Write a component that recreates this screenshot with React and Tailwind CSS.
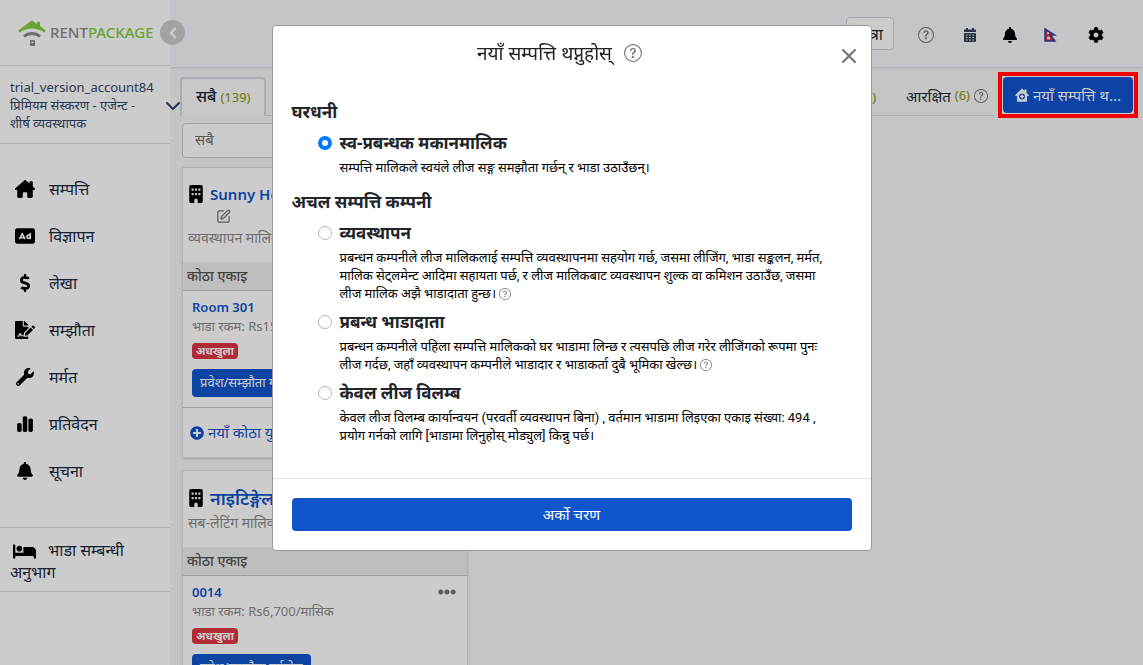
import { useState } from 'react';
import {
    FaDollarSign,
    FaFileSignature,
    FaWrench,
    FaBell,
    FaBed,
    FaCog,
    FaPlusCircle,
    FaEllipsisH,
} from 'react-icons/fa';
import {
    FaRectangleAd,
    FaChartSimple,
    FaBuilding,
    FaHouseChimney,
} from 'react-icons/fa6';
import { BsQuestionCircle } from 'react-icons/bs';
import { ChevronDown, ChevronLeft, SquarePen, X } from 'lucide-react';

const menuItems = [
    { label: 'सम्पत्ति', icon: FaHouseChimney, size: 20 },
    { label: 'विज्ञापन', icon: FaRectangleAd, size: 20 },
    { label: 'लेखा', icon: FaDollarSign, size: 18 },
    { label: 'सम्झौता', icon: FaFileSignature, size: 20 },
    { label: 'मर्मत', icon: FaWrench, size: 18 },
    { label: 'प्रतिवेदन', icon: FaChartSimple, size: 18 },
    { label: 'सूचना', icon: FaBell, size: 18 },
];

const buildings = [
    {
        name: 'Sunny Home',
        nameClass: 'text-[15px] leading-6',
        editable: true,
        type: 'व्यवस्थापन मालिक',
        unit: {
            name: 'Room 301',
            rent: 'भाडा रकम: Rs15,000/मासिक',
            action: 'प्रवेश/सम्झौता गर्नुहोस्',
        },
    },
    {
        name: 'नाइटिङ्गेल',
        nameClass: 'text-lg leading-[26px]',
        editable: false,
        type: 'सब-लेटिंग मालिक',
        unit: {
            name: '0014',
            rent: 'भाडा रकम: Rs6,700/मासिक',
            action: 'प्रवेश/सम्झौता गर्नुहोस्',
        },
    },
];

const ownerGroups = [
    {
        title: 'घरधनी',
        options: [
            {
                id: 'self',
                label: 'स्व-प्रबन्धक मकानमालिक',
                text: 'सम्पत्ति मालिकले स्वयंले लीज सङ्ग समझौता गर्छन् र भाडा उठाउँछन्।',
            },
        ],
    },
    {
        title: 'अचल सम्पत्ति कम्पनी',
        options: [
            {
                id: 'management',
                label: 'व्यवस्थापन',
                text: 'प्रबन्धन कम्पनीले लीज मालिकलाई सम्पत्ति व्यवस्थापनमा सहयोग गर्छ, जसमा लीजिंग, भाडा सङ्कलन, मर्मत, मालिक सेट्लमेन्ट आदिमा सहायता पर्छ, र लीज मालिकबाट व्यवस्थापन शुल्क वा कमिशन उठाउँछ, जसमा लीज मालिक अझै भाडादाता हुन्छ।',
                help: true,
            },
            {
                id: 'sublease',
                label: 'प्रबन्ध भाडादाता',
                text: 'प्रबन्धन कम्पनीले पहिला सम्पत्ति मालिकको घर भाडामा लिन्छ र त्यसपछि लीज गरेर लीजिंगको रूपमा पुनः लीज गर्दछ, जहाँ व्यवस्थापन कम्पनीले भाडादार र भाडाकर्ता दुबै भूमिका खेल्छ।',
                help: true,
            },
            {
                id: 'lease',
                label: 'केवल लीज विलम्ब',
                text: 'केवल लीज विलम्ब कार्यान्वयन (परवर्ती व्यवस्थापन बिना) , वर्तमान भाडामा लिइएका एकाइ संख्या: 494 , प्रयोग गर्नको लागि [भाडामा लिनुहोस् मोड्युल] किन्नु पर्छ।',
            },
        ],
    },
];

function Logo() {
    return (
        <a href="#home" className="flex items-center gap-1 text-[15px]">
            <svg width="28" height="28" viewBox="0 0 28 28" aria-hidden="true">
                <path
                    d="M0 11.500 14 1.500 19 5V3L22 2.500V7L28 11.500 26.500 13.500C18.500 8 9.500 8 1.500 13.500z"
                    fill="#84cc3d"
                />
                <path
                    d="M6 17.500C10.500 13.500 17.500 13.500 22 17.500"
                    fill="none"
                    stroke="#8a8a8a"
                    strokeWidth="3"
                />
                <path
                    d="M12 21h5v6h-5zM13.500 22.500v1.500h2v-1.500z"
                    fill="#8a8a8a"
                    fillRule="evenodd"
                />
            </svg>
            <span className="font-medium text-[#8a8a8a]">
                RENT<span className="text-[#84cc3d]">PACKAGE</span>
            </span>
        </a>
    );
}

function NepalFlag() {
    return (
        <svg width="20" height="14" viewBox="0 0 20 14" aria-hidden="true">
            <rect x="1" width="19" height="14" fill="#f8f8fa" />
            <path
                d="M2 1 11.500 7H7.500L12 13H2z"
                fill="#dc3250"
                stroke="#3040a0"
                strokeWidth="1.5"
            />
            <circle cx="5" cy="5" r="1" fill="#fff" />
            <circle cx="5.500" cy="10" r="1.500" fill="#fff" />
        </svg>
    );
}

function CalendarIcon() {
    return (
        <svg
            width="14"
            height="14"
            viewBox="0 0 14 14"
            className="ml-1 text-gray-700"
            aria-hidden="true"
        >
            <path
                d="M3 0h2v1.500h4V0h2v1.500h1.500a.5.5 0 0 1 .5.5V4H1V2a.5.5 0 0 1 .5-.5H3z"
                fill="currentColor"
            />
            <rect x="1" y="5" width="12" height="9" rx="1" fill="currentColor" />
            <path
                d="M3 7h1.500M6.200 7h1.500M9.500 7H11M3 9.500h1.500M6.200 9.500h1.500M9.500 9.500H11M3 12h1.500M6.200 12h1.500M9.500 12H11"
                stroke="#f5f7fb"
                strokeWidth="1"
            />
        </svg>
    );
}

function HouseAddIcon() {
    return (
        <svg width="14" height="14" viewBox="0 0 14 14" aria-hidden="true">
            <path
                d="M7 0.500 9.500 2.800V1.500h2v3.200L14 7.200l-.8.800H12v5a.7.7 0 0 1-.7.700H2.700A.7.700 0 0 1 2 13V8H.800L0 7.200z"
                fill="currentColor"
            />
            <circle cx="7" cy="8.500" r="3" fill="#0d43a6" />
            <path d="M7 6.500v4M5 8.500h4" stroke="currentColor" strokeWidth="1.300" />
        </svg>
    );
}

function Sidebar() {
    return (
        <aside className="relative w-[170px] shrink-0 bg-white">
            <div className="flex h-[66px] items-center border-b border-[#dcdcdc] pl-[18px]">
                <Logo />
            </div>
            <button
                type="button"
                aria-label="Collapse"
                className="absolute top-5 -right-[15px] z-10 flex size-[25px] items-center justify-center rounded-full bg-[#cccccc] text-white"
            >
                <ChevronLeft size={18} strokeWidth={3} />
            </button>
            <div className="relative border-b border-[#dcdcdc] pt-3 pb-[11px] pl-2.5 text-[13px] leading-[18px] text-[#344767]">
                <p>trial_version_account84</p>
                <p className="w-[140px]">
                    प्रिमियम संस्करण - एजेन्ट - शीर्ष व्यवस्थापक
                </p>
                <ChevronDown
                    size={24}
                    className="absolute top-7 -right-[15px] z-10"
                />
            </div>
            <nav className="flex flex-col pt-[21px] text-base text-[#1c2a3f]">
                {menuItems.map(({ label, icon: Icon, size }) => (
                    <a
                        key={label}
                        href="#menu"
                        className="flex h-[47px] items-center gap-3.5 pl-[15px]"
                    >
                        <span className="flex w-5 justify-center text-black">
                            <Icon size={size} />
                        </span>
                        {label}
                    </a>
                ))}
            </nav>
            <a
                href="#rent"
                className="mt-[33px] block border-y border-[#dcdcdc] pt-[11px] pb-2 pl-2.5 text-base leading-[22px] text-[#1c2a3f]"
            >
                <FaBed
                    size={23}
                    className="-my-2 mr-3 ml-[3px] inline align-middle text-black"
                />
                भाडा सम्बन्धी
                <br />
                अनुभाग
            </a>
        </aside>
    );
}

function Header() {
    return (
        <header className="flex h-[67px] items-center justify-end bg-[#f5f7fb] pr-[39px] shadow-sm">
            <button
                type="button"
                className="mr-6 h-[33px] rounded border border-[#cfd3d8] bg-white px-2.5 text-base text-gray-800"
            >
                यात्रा
            </button>
            <div className="flex items-center gap-[25px] pt-0.5 text-black">
                <BsQuestionCircle size={16} className="text-neutral-500" />
                <CalendarIcon />
                <FaBell size={16} />
                <NepalFlag />
                <FaCog size={16} />
            </div>
        </header>
    );
}

function Tabs() {
    return (
        <div className="flex items-start gap-1 pt-[5px] pr-[5px] pl-2.5 text-[15px]">
            <div className="mt-[5px] flex h-[39px] grow items-stretch border-b border-[#d5d9de]">
                <button
                    type="button"
                    className="-mb-px rounded-t border-2 border-b-0 border-[#d5dbe3] bg-[#fafafa] px-3.5 pb-1 text-gray-800"
                >
                    <span className="text-base font-medium">सबै</span>{' '}
                    <span className="text-[13px] text-[#889900]">(139)</span>
                </button>
                <button type="button" className="ml-auto px-2 text-gray-800">
                    खाली <span className="text-[13px] text-[#889900]">(0)</span>
                </button>
                <button
                    type="button"
                    className="flex items-center gap-1 pr-1.5 pl-[22px] text-gray-800"
                >
                    आरक्षित{' '}
                    <span className="text-[13px] text-[#889900]">(6)</span>
                    <BsQuestionCircle size={14} className="text-neutral-500" />
                </button>
            </div>
            <div className="relative z-30 border-4 border-[#f00000] bg-[#c6c6c6] p-px">
                <button
                    type="button"
                    className="flex h-9 w-[130px] items-center justify-center gap-1 rounded bg-[#0d43a6] text-[#cccccc]"
                >
                    <HouseAddIcon />
                    नयाँ सम्पत्ति थ...
                </button>
            </div>
        </div>
    );
}

function BuildingCard({ building }) {
    const { name, nameClass, editable, type, unit } = building;

    return (
        <article className="mb-3 border border-[#e0e0e0] bg-white shadow">
            <div className="px-[5px] pt-3.5 pb-3">
                <h3 className="flex items-center gap-[5px] font-semibold text-[#1155cc]">
                    <FaBuilding size={18} className="-ml-px text-black" />
                    <span className={nameClass}>{name}</span>
                </h3>
                {editable && (
                    <button
                        type="button"
                        aria-label="Edit"
                        className="ml-7 block h-5 text-neutral-500"
                    >
                        <SquarePen size={15} />
                    </button>
                )}
                <p className="text-sm leading-6 text-[#8a8a8a]">{type}</p>
            </div>
            <h4 className="border-b border-[#c8c8c8] bg-[#eeeeee] px-1 text-sm leading-7 font-medium text-neutral-600">
                कोठा एकाइ
            </h4>
            <div className="border-b border-[#c8c8c8] px-[9px] pt-1.5 pb-2.5">
                <div className="flex items-center justify-between text-[#1155cc]">
                    <a
                        href="#unit"
                        className="text-[13px] leading-5 font-semibold"
                    >
                        {unit.name}
                    </a>
                    <FaEllipsisH size={18} className="mr-0.5 text-neutral-500" />
                </div>
                <p className="text-[13px] leading-[18px] text-[#8a8a8a]">
                    {unit.rent}
                </p>
                <div className="flex pt-2 pb-2.5">
                    <span className="rounded bg-[#dc3545] px-1 text-[11px] leading-4 font-bold text-white">
                        अधखुला
                    </span>
                </div>
                <button
                    type="button"
                    className="block h-7 rounded-sm bg-[#1155cc] px-2 text-[13px] text-white"
                >
                    {unit.action}
                </button>
            </div>
            <button
                type="button"
                className="flex h-[49px] items-center gap-1 px-[7px] text-[15px] text-[#1155cc]"
            >
                <FaPlusCircle size={14} />
                नयाँ कोठा युनिट
            </button>
        </article>
    );
}

function AddPropertyModal() {
    const [selected, setSelected] = useState('self');

    return (
        <div className="fixed inset-0 z-40 flex items-start justify-center pt-[25px]">
            <div
                role="dialog"
                aria-labelledby="modal-title"
                className="w-[600px] max-w-full rounded border border-[#999999] bg-white"
            >
                <div className="relative flex items-center justify-center gap-3 pt-3 pr-6 text-[#222222]">
                    <h2 id="modal-title" className="text-[19px] leading-[30px]">
                        नयाँ सम्पत्ति थप्नुहोस्
                    </h2>
                    <BsQuestionCircle size={18} className="text-neutral-500" />
                    <button
                        type="button"
                        aria-label="Close"
                        className="absolute top-[18px] right-2.5 text-neutral-500"
                    >
                        <X size={24} strokeWidth={2} />
                    </button>
                </div>
                <div className="px-[19px] pt-8 pb-5">
                    {ownerGroups.map((group) => (
                        <fieldset key={group.title} className="mb-1.5">
                            <legend className="mb-[7px] text-[17px] leading-6 font-bold text-[#212529]">
                                {group.title}
                            </legend>
                            {group.options.map((option) => (
                                <div
                                    key={option.id}
                                    className="mb-[7px] flex items-start gap-2 pr-5 pl-[26px]"
                                >
                                    <input
                                        type="radio"
                                        id={option.id}
                                        name="owner"
                                        checked={selected === option.id}
                                        onChange={() => setSelected(option.id)}
                                        className="mt-[5px] size-3.5 shrink-0 appearance-none rounded-full border border-[#adb5bd] bg-white checked:border-4 checked:border-[#007bff]"
                                    />
                                    <div>
                                        <label
                                            htmlFor={option.id}
                                            className="block text-[17px] leading-6 font-bold text-[#212529]"
                                        >
                                            {option.label}
                                        </label>
                                        <p className="mt-1 font-[Roboto,'Noto_Sans',sans-serif] text-[13px] leading-[18px] text-black">
                                            {option.text}{' '}
                                            {option.help && (
                                                <BsQuestionCircle
                                                    size={12}
                                                    className="inline align-[-2px] text-neutral-500"
                                                />
                                            )}
                                        </p>
                                    </div>
                                </div>
                            ))}
                        </fieldset>
                    ))}
                </div>
                <div className="border-t border-[#dee2e6] px-[19px] py-[19px]">
                    <button
                        type="button"
                        className="h-[33px] w-full rounded bg-[#1155cc] text-[15px] text-white"
                    >
                        अर्को चरण
                    </button>
                </div>
            </div>
        </div>
    );
}

export default function App() {
    return (
        <div className="flex h-screen overflow-hidden font-['Noto_Sans',sans-serif]">
            <Sidebar />
            <div className="min-w-0 grow bg-[#f7f7f7]">
                <Header />
                <Tabs />
                <main className="w-[298px] pl-3">
                    <input
                        type="text"
                        aria-label="सबै"
                        placeholder="सबै"
                        className="mt-[5px] mb-[9px] h-[35px] w-full rounded border border-[#cccccc] bg-white px-3 pb-1 text-[15px] placeholder:text-neutral-500"
                    />
                    {buildings.map((building) => (
                        <BuildingCard key={building.name} building={building} />
                    ))}
                </main>
            </div>
            <div className="fixed inset-0 z-20 bg-black/20" />
            <AddPropertyModal />
        </div>
    );
}
